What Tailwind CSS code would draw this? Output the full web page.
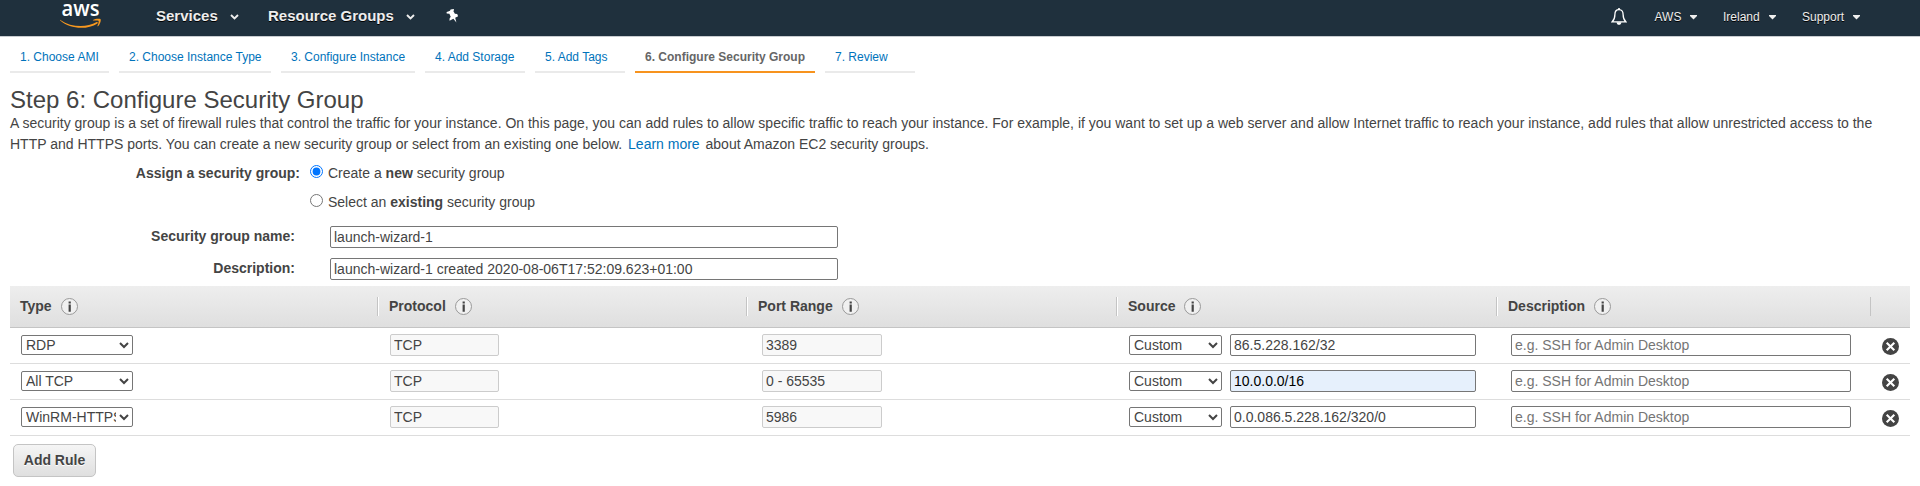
<!DOCTYPE html>
<html lang="en">
<head>
<meta charset="utf-8">
<title>Configure Security Group</title>
<script src="https://cdn.jsdelivr.net/npm/@tailwindcss/browser@4"></script>
</head>
<body class="bg-white text-[#444] text-[14px] leading-[16px] font-['Liberation_Sans',Arial,sans-serif] h-[486px] overflow-hidden">
<svg class="hidden">
  <symbol id="info" viewBox="0 0 17 17"><circle cx="8.5" cy="8.5" r="8" fill="#f0f0f0" stroke="#999"/><path d="M7.600 3.500h2.200v2H7.600zM7.600 6.500h2.200v7.300H7.600z" fill="#444"/></symbol>
  <symbol id="chev" viewBox="0 0 9 6"><path d="M1 1l3.500 3.500L8 1" fill="none" stroke="#eee" stroke-width="1.900"/></symbol>
  <symbol id="caret" viewBox="0 0 8 5"><path d="M0 0h7v1L3.500 4.500 0 1z" fill="#eee"/></symbol>
  <symbol id="del" viewBox="0 0 17 17"><circle cx="8.500" cy="8.500" r="8.500" fill="#444"/><path d="M4.700 4.700l7.600 7.600M12.300 4.700l-7.600 7.600" stroke="#fff" stroke-width="2.100"/></symbol>
</svg>

<header class="flex h-[37px] bg-[#1f303d] border-b border-[#c8ccd0] text-[#eee] [text-shadow:0_1px_0_#000]">
  <div class="ml-[60px] w-[42px] shrink-0">
    <svg class="w-[42px] h-[37px]" viewBox="0 0 42 37">
      <text x="1.500" y="16" textLength="38" lengthAdjust="spacingAndGlyphs" font-family="Open Sans, Noto Sans, sans-serif" font-size="21" font-weight="600" fill="#fff" style="text-shadow:none">aws</text>
      <path d="M.3 19.900c11 7.600 26 8 36.400 2.200.9-.4 1.600.6.700 1.300C27 30.200 10 29.200.2 20.600c-.4-.4-.2-.9.100-.7z" fill="#f7981f"/>
      <path d="M33 20c2-1.500 6.300-1.600 7.400-1 1 .8-.2 5.300-2.400 7.200-.4.300-.8.100-.6-.3.800-1.700 1.600-4.500 1.200-5.100-.5-.6-3.400-.4-5.200-.3-.6.100-.7-.3-.4-.5z" fill="#f7981f"/>
    </svg>
  </div>
  <nav class="flex flex-1 text-[15px] leading-[17px] font-bold">
    <span class="ml-[54px] w-[62px] mt-[7px]">Services</span>
    <svg class="ml-[12px] mt-[14px] w-[9px] h-[6px]"><use href="#chev"/></svg>
    <span class="ml-[29px] w-[126px] whitespace-nowrap mt-[7px]">Resource Groups</span>
    <svg class="ml-[12px] mt-[14px] w-[9px] h-[6px]"><use href="#chev"/></svg>
    <svg class="ml-[31px] mt-[9px] w-[14px] h-[14px]" viewBox="0 0 14 14"><path d="M4.600.4L7.800 0l.2 1.300-.7.700 1.600 2.700 2.300.2.900 2.300-2.900 1.600 1.200 4.800-3-3.900-3.900 2 .1-2.300 1.100-1.700-1.300-3L.7 4.500.6 3l1.600-.6L4 1.800z" fill="#fff"/></svg>
  </nav>
  <div class="flex text-[12px] leading-[14px] pt-[7px] w-[309px] shrink-0">
    <svg class="mt-[1px] w-[16px] h-[17px]" viewBox="0 0 16 17"><path d="M8 1.700C4.900 1.700 3.900 4.200 3.900 6.500c0 3.500-.9 5.500-2.700 7.300h13.600c-1.800-1.800-2.700-3.800-2.700-7.300 0-2.300-1-4.800-4.100-4.800z" fill="none" stroke="#fff" stroke-width="1.300"/><path d="M7.200 0h1.600v2H7.200zM5.500 14.200h5c-.3 1.700-1.200 2.600-2.500 2.600s-2.200-.9-2.500-2.600z" fill="#fff"/></svg>
    <span class="ml-[27.500px] w-[26.500px] mt-[3px]">AWS</span>
    <svg class="ml-[9px] mt-[8px] w-[8px] h-[5px]"><use href="#caret"/></svg>
    <span class="ml-[25px] w-[38px] mt-[3px]">Ireland</span>
    <svg class="ml-[8px] mt-[8px] w-[8px] h-[5px]"><use href="#caret"/></svg>
    <span class="ml-[25px] w-[43px] mt-[3px]">Support</span>
    <svg class="ml-[8px] mt-[8px] w-[8px] h-[5px]"><use href="#caret"/></svg>
  </div>
</header>

<nav class="flex gap-[10px] ml-[10px] h-[36px] text-[12px] leading-[14px] text-[#0073bb] whitespace-nowrap *:border-b-2 *:border-[#eaeaea] *:pl-[10px] *:pt-[13px]">
  <a class="w-[99px]">1. Choose AMI</a>
  <a class="w-[152px]">2. Choose Instance Type</a>
  <a class="w-[134px]">3. Configure Instance</a>
  <a class="w-[100px]">4. Add Storage</a>
  <a class="w-[90px]">5. Add Tags</a>
  <a class="w-[180px] border-[#f7931e]! text-[#666] font-bold">6. Configure Security Group</a>
  <a class="w-[90px]">7. Review</a>
</nav>

<main class="px-[10px]">
  <h1 class="text-[24px] leading-[27px] mt-[13px]">Step 6: Configure Security Group</h1>
  <p class="leading-[21px] whitespace-nowrap">A security group is a set of firewall rules that control the traffic for your instance. On this page, you can add rules to allow specific traffic to reach your instance. For example, if you want to set up a web server and allow Internet traffic to reach your instance, add rules that allow unrestricted access to the<br>HTTP and HTTPS ports. You can create a new security group or select from an existing one below. <a class="text-[#0073bb] mx-[2px]">Learn more</a> about Amazon EC2 security groups.</p>

  <div class="flex h-[29px] mt-[10px]">
    <b class="w-[290px] text-right">Assign a security group:</b>
    <label class="flex"><input type="radio" name="g" checked class="w-[13px] h-[13px] ml-[10px] mr-[5px]"><span>Create a <b>new</b> security group</span></label>
  </div>
  <div class="flex h-[32px]">
    <label class="flex ml-[290px]"><input type="radio" name="g" class="w-[13px] h-[13px] ml-[10px] mr-[5px]"><span>Select an <b>existing</b> security group</span></label>
  </div>
  <div class="flex h-[32px]">
    <b class="w-[285px] text-right mt-[2px]">Security group name:</b>
    <input class="ml-[35px] w-[508px] h-[22px] border border-[#767676] rounded-[2px] px-[3px]" value="launch-wizard-1">
  </div>
  <div class="flex h-[28px]">
    <b class="w-[285px] text-right mt-[2px]">Description:</b>
    <input class="ml-[35px] w-[508px] h-[22px] border border-[#767676] rounded-[2px] px-[3px]" value="launch-wizard-1 created 2020-08-06T17:52:09.623+01:00">
  </div>

  <div class="grid grid-cols-[367px_369px_370px_380px_374px_40px] h-[42px] pt-[11px] bg-linear-to-b from-[#eee] to-[#dfdfdf] border-b border-[#c4c4c4] font-bold *:h-[19px] *:flex *:items-start *:gap-[10px] *:pl-[11px] *:pt-[1px]">
    <div class="pl-[10px]!">Type<svg class="-ml-[1px] w-[17px] h-[17px]"><use href="#info"/></svg></div>
    <div class="border-l border-[#c4c4c4] shadow-[inset_1px_0_#fff]">Protocol<svg class="-ml-[1px] w-[17px] h-[17px]"><use href="#info"/></svg></div>
    <div class="border-l border-[#c4c4c4] shadow-[inset_1px_0_#fff]">Port Range<svg class="-ml-[1px] w-[17px] h-[17px]"><use href="#info"/></svg></div>
    <div class="border-l border-[#c4c4c4] shadow-[inset_1px_0_#fff]">Source<svg class="-ml-[1px] w-[17px] h-[17px]"><use href="#info"/></svg></div>
    <div class="border-l border-[#c4c4c4] shadow-[inset_1px_0_#fff]">Description<svg class="-ml-[1px] w-[17px] h-[17px]"><use href="#info"/></svg></div>
    <div class="border-l border-[#c4c4c4]"></div>
  </div>

  <div class="flex items-start pt-[6px] h-[36px] border-b border-[#ddd]">
    <select class="mt-[1px] ml-[11px] w-[112px] h-[20px] border border-[#767676] rounded-[2px] bg-white"><option>RDP</option></select>
    <input class="ml-[257px] w-[109px] h-[22px] border border-[#ccc] rounded-[2px] bg-[#f8f8f8] px-[3px]" value="TCP">
    <input class="ml-[263px] w-[120px] h-[22px] border border-[#ccc] rounded-[2px] bg-[#f8f8f8] px-[3px]" value="3389">
    <select class="mt-[1px] ml-[247px] w-[93px] h-[20px] border border-[#767676] rounded-[2px] bg-white"><option>Custom</option></select>
    <input class="ml-[8px] w-[246px] h-[22px] border border-[#767676] rounded-[2px] px-[3px]" value="86.5.228.162/32">
    <input class="ml-[35px] w-[340px] h-[22px] border border-[#767676] rounded-[2px] px-[3px] placeholder:text-[#757575]" placeholder="e.g. SSH for Admin Desktop">
    <svg class="ml-[31px] mt-[4px] w-[17px] h-[17px]"><use href="#del"/></svg>
  </div>
  <div class="flex items-start pt-[6px] h-[36px] border-b border-[#ddd]">
    <select class="mt-[1px] ml-[11px] w-[112px] h-[20px] border border-[#767676] rounded-[2px] bg-white"><option>All TCP</option></select>
    <input class="ml-[257px] w-[109px] h-[22px] border border-[#ccc] rounded-[2px] bg-[#f8f8f8] px-[3px]" value="TCP">
    <input class="ml-[263px] w-[120px] h-[22px] border border-[#ccc] rounded-[2px] bg-[#f8f8f8] px-[3px]" value="0 - 65535">
    <select class="mt-[1px] ml-[247px] w-[93px] h-[20px] border border-[#767676] rounded-[2px] bg-white"><option>Custom</option></select>
    <input class="ml-[8px] w-[246px] h-[22px] border border-[#767676] rounded-[2px] px-[3px] bg-[#e6f0fc] text-black" value="10.0.0.0/16">
    <input class="ml-[35px] w-[340px] h-[22px] border border-[#767676] rounded-[2px] px-[3px] placeholder:text-[#757575]" placeholder="e.g. SSH for Admin Desktop">
    <svg class="ml-[31px] mt-[4px] w-[17px] h-[17px]"><use href="#del"/></svg>
  </div>
  <div class="flex items-start pt-[6px] h-[36px] border-b border-[#ddd]">
    <select class="mt-[1px] ml-[11px] w-[112px] h-[20px] border border-[#767676] rounded-[2px] bg-white"><option>WinRM-HTTPS</option></select>
    <input class="ml-[257px] w-[109px] h-[22px] border border-[#ccc] rounded-[2px] bg-[#f8f8f8] px-[3px]" value="TCP">
    <input class="ml-[263px] w-[120px] h-[22px] border border-[#ccc] rounded-[2px] bg-[#f8f8f8] px-[3px]" value="5986">
    <select class="mt-[1px] ml-[247px] w-[93px] h-[20px] border border-[#767676] rounded-[2px] bg-white"><option>Custom</option></select>
    <input class="ml-[8px] w-[246px] h-[22px] border border-[#767676] rounded-[2px] px-[3px]" value="0.0.086.5.228.162/320/0">
    <input class="ml-[35px] w-[340px] h-[22px] border border-[#767676] rounded-[2px] px-[3px] placeholder:text-[#757575]" placeholder="e.g. SSH for Admin Desktop">
    <svg class="ml-[31px] mt-[4px] w-[17px] h-[17px]"><use href="#del"/></svg>
  </div>

  <button class="block mt-[8px] ml-[3px] w-[83px] h-[33px] pb-[1px] border border-[#c4c4c4] rounded-[5px] bg-linear-to-b from-[#f5f5f5] to-[#dfdfdf] font-bold [text-shadow:0_1px_0_#fff]">Add Rule</button>
</main>
</body>
</html>
